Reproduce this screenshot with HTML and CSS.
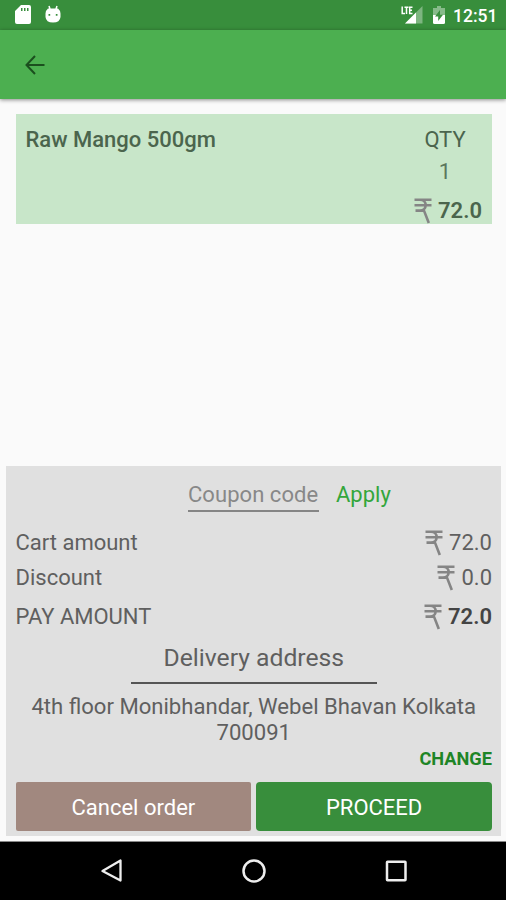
FILE: index.html
```html
<!DOCTYPE html>
<html lang="en">
<head>
<meta charset="utf-8">
<title>Cart</title>
<link rel="stylesheet" href="styles.css">
</head>
<body>
<svg width="0" height="0" class="defs">
  <symbol id="rupee" viewBox="0 0 18 26"><path d="M.5 1.800H17.500M.5 7.200H17.500M1.500 12.600H11M6 1.800C13.500 1.800 13.500 12.600 6 12.600M10 12.600L14.800 25" fill="none" stroke="currentColor" stroke-width="2.600"/></symbol>
</svg>
<div class="screen">
  <header class="status">
    <div class="status-group">
      <svg class="sd" width="16" height="19" viewBox="0 0 16 19"><path fill="#fff" fill-rule="evenodd" d="M6 0H14Q16 0 16 2V17Q16 19 14 19H2Q0 19 0 17V6ZM6 3V6H7.500V3ZM9 3V6H10.500V3ZM12 3V6H13.500V3Z"/></svg>
      <svg class="droid" width="16" height="19" viewBox="0 0 16 19"><path d="M4 1L5 4M12 1L11 4" stroke="#fff" stroke-width="1.500"/><path fill="#fff" fill-rule="evenodd" d="M3 3.500H13Q15 5 15.500 8.500V12Q15 17.500 8 17.500Q1 17.500 .5 12V8.500Q1 5 3 3.500ZM3.500 9V10.700H5.200V9ZM10.800 9V10.700H12.500V9Z"/></svg>
    </div>
    <div class="status-group">
      <svg class="signal" width="22" height="18" viewBox="0 0 22 18"><path fill="#fff" fill-opacity=".35" d="M21.500 0V17.500H4Z"/><path fill="#fff" d="M15 6.500V17.500H4Z"/><path fill="none" stroke="#fff" stroke-width="1.500" d="M1.200 .5V7.500H4M3.500 1.200H7.500M5.500 1.200V8M11.500 1.200H8.700V7.500H11.500M8.700 4.300H11"/></svg>
      <svg class="battery" width="12" height="18" viewBox="0 0 12 18"><path fill="#fff" fill-opacity=".4" d="M4 0H8V2H12V9H0V2H4Z"/><path fill="#fff" d="M0 9H12V16.500Q12 18 10.500 18H1.500Q0 18 0 16.500Z"/><path fill="#388e3c" d="M7 4L2 10.500H5.200V15L10 8.800H7Z"/></svg>
      <span class="clock">12:51</span>
    </div>
  </header>
  <nav class="toolbar">
    <svg width="20" height="20" viewBox="0 0 20 20"><path d="M10 1L1.500 10L10 19M1.500 10H19.500" fill="none" stroke="#1b4f1e" stroke-width="2"/></svg>
  </nav>
  <main class="content">
    <section class="item">
      <h1 class="item-name">Raw Mango 500gm</h1>
      <div class="item-side">
        <div class="qty-label">QTY</div>
        <div class="qty">1</div>
        <div class="price strong"><svg class="rupee"><use href="#rupee"/></svg><span>72.0</span></div>
      </div>
    </section>
    <section class="summary">
      <div class="coupon"><span class="code">Coupon code</span><span class="apply">Apply</span></div>
      <div class="row cart"><span>Cart amount</span><div class="price"><svg class="rupee"><use href="#rupee"/></svg><span>72.0</span></div></div>
      <div class="row discount"><span>Discount</span><div class="price"><svg class="rupee"><use href="#rupee"/></svg><span>0.0</span></div></div>
      <div class="row pay"><span>PAY AMOUNT</span><div class="price strong"><svg class="rupee"><use href="#rupee"/></svg><span>72.0</span></div></div>
      <h2 class="delivery">Delivery address</h2>
      <p class="address">4th floor Monibhandar, Webel Bhavan Kolkata<br>700091</p>
      <div class="change">CHANGE</div>
      <div class="actions"><button class="cancel">Cancel order</button><button class="proceed">PROCEED</button></div>
    </section>
  </main>
  <footer class="navbar">
    <svg width="24" height="26" viewBox="0 0 24 26"><path d="M20.500 2.500V22.500L2.500 13Z" fill="none" stroke="#eee" stroke-width="2.300" stroke-linejoin="round"/></svg>
    <svg width="24" height="26" viewBox="0 0 24 26"><circle cx="12" cy="13" r="10.500" fill="none" stroke="#eee" stroke-width="2.500"/></svg>
    <svg width="24" height="26" viewBox="0 0 24 26"><rect x="3" y="3.700" width="18.500" height="18.500" rx=".5" fill="none" stroke="#eee" stroke-width="2.500"/></svg>
  </footer>
</div>
</body>
</html>
```

FILE: styles.css
```css
* { box-sizing: border-box; }
body { margin: 0; font-family: Roboto, "Liberation Sans", sans-serif; color: #5f5f5f; }
.defs { display: block; }
.screen { width: 506px; height: 900px; display: flex; flex-direction: column; background: #fafafa; overflow: hidden; }
svg { flex: none; display: block; }
.status { flex: none; height: 30px; background: #388e3c; display: flex; justify-content: space-between; padding: 5px 10px 0 15px; }
.status-group { display: flex; align-items: flex-start; }
.droid { margin-left: 14px; }
.signal { margin-top: 1px; }
.battery { margin: 1px 0 0 10px; }
.clock { margin-left: 8px; width: 43px; font-size: 17.5px; line-height: 22px; font-weight: 500; color: #fff; white-space: nowrap; }
.toolbar { flex: none; height: 69px; background: #4caf50; padding: 25px; box-shadow: 0 1px 4px rgba(0, 0, 0, .45); }
.content { flex: 1; display: flex; flex-direction: column; justify-content: space-between; padding: 15px 5px 5px 6px; border-bottom: 1px solid #888; }
.item { height: 110px; margin: 0 9px 0 9.5px; padding: 10px; background: #c8e6c9; display: flex; justify-content: space-between; color: #4b654d; }
.item-name { margin: 0; font-size: 22px; line-height: 32px; font-weight: 500; }
.item-side { font-size: 22px; line-height: 32px; }
.qty-label, .qty { width: 62px; text-align: center; }
.qty { color: #5b765d; }
.item-side .price { margin-top: 7px; height: 32px; }
.price { display: flex; align-items: center; justify-content: flex-end; gap: 6px; font-size: 22px; }
.strong { font-weight: 600; }
.rupee { width: 18px; height: 26px; color: #858585; }
.summary { height: 370px; background: #e0e0e0; padding: 10px 9px 5px 9.5px; font-size: 22px; }
.coupon { display: flex; gap: 17px; height: 36px; margin-left: 172.5px; line-height: 37px; }
.code { width: 131px; height: 36px; border-bottom: 2px solid #858585; color: #888; white-space: nowrap; letter-spacing: .05px; }
.apply { color: #33a63b; }
.row { display: flex; justify-content: space-between; align-items: center; height: 35px; }
.cart { margin-top: 13px; }
.pay { margin-top: 4px; }
.pay .strong { color: #444; }
.delivery { width: 246px; height: 48px; margin: 2px auto 0; padding-top: 2px; border-bottom: 2px solid #555; text-align: center; font-weight: 400; font-size: 24.7px; line-height: 40px; white-space: nowrap; }
.address { margin: 9px 0 0; text-align: center; font-size: 22.1px; line-height: 26px; white-space: nowrap; }
.change { height: 28px; text-align: right; color: #1e8526; font-size: 18.2px; line-height: 27px; font-weight: 700; }
.actions { display: flex; gap: 5px; margin-top: 9px; }
.actions button { flex: 1; height: 49px; padding: 0; border: 0; border-radius: 2px; font: 400 22px/51px Roboto, sans-serif; color: #fff; }
.cancel { background: #a1887f; }
.actions .proceed { background: #388e3c; border-radius: 4px; }
.navbar { flex: none; height: 58px; background: #000; display: flex; justify-content: center; gap: 118px; padding: 16px 0 0 1px; }
```
